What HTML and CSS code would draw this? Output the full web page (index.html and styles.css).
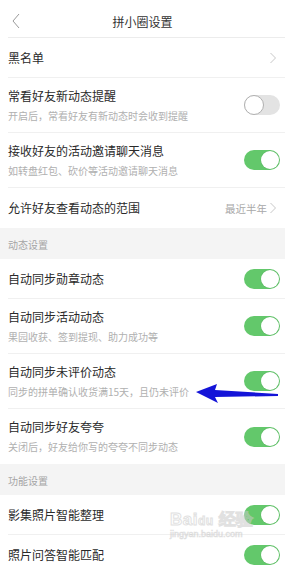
FILE: index.html
```html
<!DOCTYPE html>
<html lang="zh">
<head>
<meta charset="utf-8">
<link rel="stylesheet" href="styles.css">
</head>
<body>
<div class="page">
  <header class="nav">
    <svg class="back" width="12" height="16" viewBox="0 0 12 16"><path d="M9 1 L3 8 L9 15" fill="none" stroke="#9a9a9a" stroke-width="1"/></svg>
    <div class="nav-title">拼小圈设置</div>
  </header>

  <div class="row single">
    <div class="label">黑名单</div>
    <svg class="chev" width="8" height="12" viewBox="0 0 8 12"><path d="M1.5 1 L6.5 6 L1.5 11" fill="none" stroke="#c8c8c8" stroke-width="1"/></svg>
  </div>

  <div class="row double">
    <div class="texts">
      <div class="label">常看好友新动态提醒</div>
      <div class="sub">开启后，常看好友有新动态时会收到提醒</div>
    </div>
    <span class="switch off"><span class="knob"></span></span>
  </div>

  <div class="row double">
    <div class="texts">
      <div class="label">接收好友的活动邀请聊天消息</div>
      <div class="sub">如转盘红包、砍价等活动邀请聊天消息</div>
    </div>
    <span class="switch on"><span class="knob"></span></span>
  </div>

  <div class="row single noline">
    <div class="label">允许好友查看动态的范围</div>
    <div class="right">
      <span class="value">最近半年</span>
      <svg class="chev" width="8" height="12" viewBox="0 0 8 12"><path d="M1.5 1 L6.5 6 L1.5 11" fill="none" stroke="#c8c8c8" stroke-width="1"/></svg>
    </div>
  </div>

  <div class="section">动态设置</div>

  <div class="row single">
    <div class="label">自动同步勋章动态</div>
    <span class="switch on"><span class="knob"></span></span>
  </div>

  <div class="row double">
    <div class="texts">
      <div class="label">自动同步活动动态</div>
      <div class="sub">果园收获、签到提现、助力成功等</div>
    </div>
    <span class="switch on"><span class="knob"></span></span>
  </div>

  <div class="row double">
    <div class="texts">
      <div class="label">自动同步未评价动态</div>
      <div class="sub">同步的拼单确认收货满15天，且仍未评价</div>
    </div>
    <span class="switch on"><span class="knob"></span></span>
  </div>

  <div class="row double noline">
    <div class="texts">
      <div class="label">自动同步好友夸夸</div>
      <div class="sub">关闭后，好友给你写的夸夸不同步动态</div>
    </div>
    <span class="switch on"><span class="knob"></span></span>
  </div>

  <div class="section">功能设置</div>

  <div class="row single">
    <div class="label">影集照片智能整理</div>
    <span class="switch on"><span class="knob"></span></span>
  </div>

  <div class="row single noline">
    <div class="label">照片问答智能匹配</div>
    <span class="switch on"><span class="knob"></span></span>
  </div>

  <svg class="arrow" width="90" height="24" viewBox="0 0 90 24">
    <path d="M0 8 L21 0 L19 6 L82 10 L82 12 L19 13 L22 19 Z" fill="#1414d8"/>
  </svg>

  <div class="watermark">
    <div class="wm-big">Bai<span class="paw">du</span> 经验</div>
    <div class="wm-small">jingyan.baidu.com</div>
  </div>
</div>
</body>
</html>
```

FILE: styles.css
```css
* { box-sizing: border-box; }
html, body { margin: 0; padding: 0; background: #fff; }
body {
  font-family: "Noto Sans CJK SC", "Noto Sans", sans-serif;
  color: #222;
  width: 285px;
  height: 575px;
  overflow: hidden;
}
.page { position: relative; }

.nav {
  height: 38px;
  display: flex;
  align-items: center;
  justify-content: center;
  position: relative;
  margin-left: 8px;
  border-bottom: 1px solid #ececec;
  padding-top: 5px;
}
.back { position: absolute; left: 2px; top: 13px; }
.nav-title { font-size: 12px; color: #333; margin-left: -8px; }

.row {
  display: flex;
  align-items: center;
  justify-content: space-between;
  margin-left: 8px;
  padding-right: 5px;
  border-bottom: 1px solid #f0f0f0;
}
.row.noline { border-bottom: none; }
.row.single { height: 40px; }
.row.double { height: 55px; }

.label { font-size: 12px; line-height: 16px; color: #2a2a2a; }
.sub { font-size: 10px; line-height: 14px; color: #b0b0b0; margin-top: 5px; }

.chev { display: block; margin-right: 3px; }
.right { display: flex; align-items: center; gap: 2px; }
.value { font-size: 10.5px; color: #a8a8a8; }

.section {
  height: 31px;
  background: #f4f4f4;
  font-size: 10px;
  color: #a5a5a5;
  display: flex;
  align-items: center;
  padding-left: 8px;
  padding-top: 2px;
}

.switch {
  width: 36px;
  height: 20px;
  border-radius: 10px;
  position: relative;
  flex: none;
}
.switch.on { background: #63c86b; }
.switch.off { background: #e3e3e3; }
.knob {
  position: absolute;
  top: 1px;
  width: 18px;
  height: 18px;
  border-radius: 50%;
  background: #fff;
}
.switch.on .knob { right: 1px; box-shadow: 0 0 0 0.5px rgba(0,0,0,0.08); }
.switch.off .knob { left: 0; top: 0; width: 20px; height: 20px; border: 1px solid #b0b0b0; }

.arrow { position: absolute; left: 196px; top: 384px; }

.watermark {
  position: absolute;
  left: 170px;
  top: 508px;
  opacity: 0.55;
  pointer-events: none;
}
.wm-big {
  font-family: "Liberation Sans", sans-serif;
  font-size: 17px;
  font-weight: bold;
  color: #fff;
  -webkit-text-stroke: 1px #c9c9c9;
  letter-spacing: 0.5px;
}
.paw { font-size: 12px; }
.wm-small {
  font-family: "Liberation Sans", sans-serif;
  font-size: 9px;
  color: #fff;
  -webkit-text-stroke: 0.6px #c2c2c2;
  margin-top: -2px;
}
```
